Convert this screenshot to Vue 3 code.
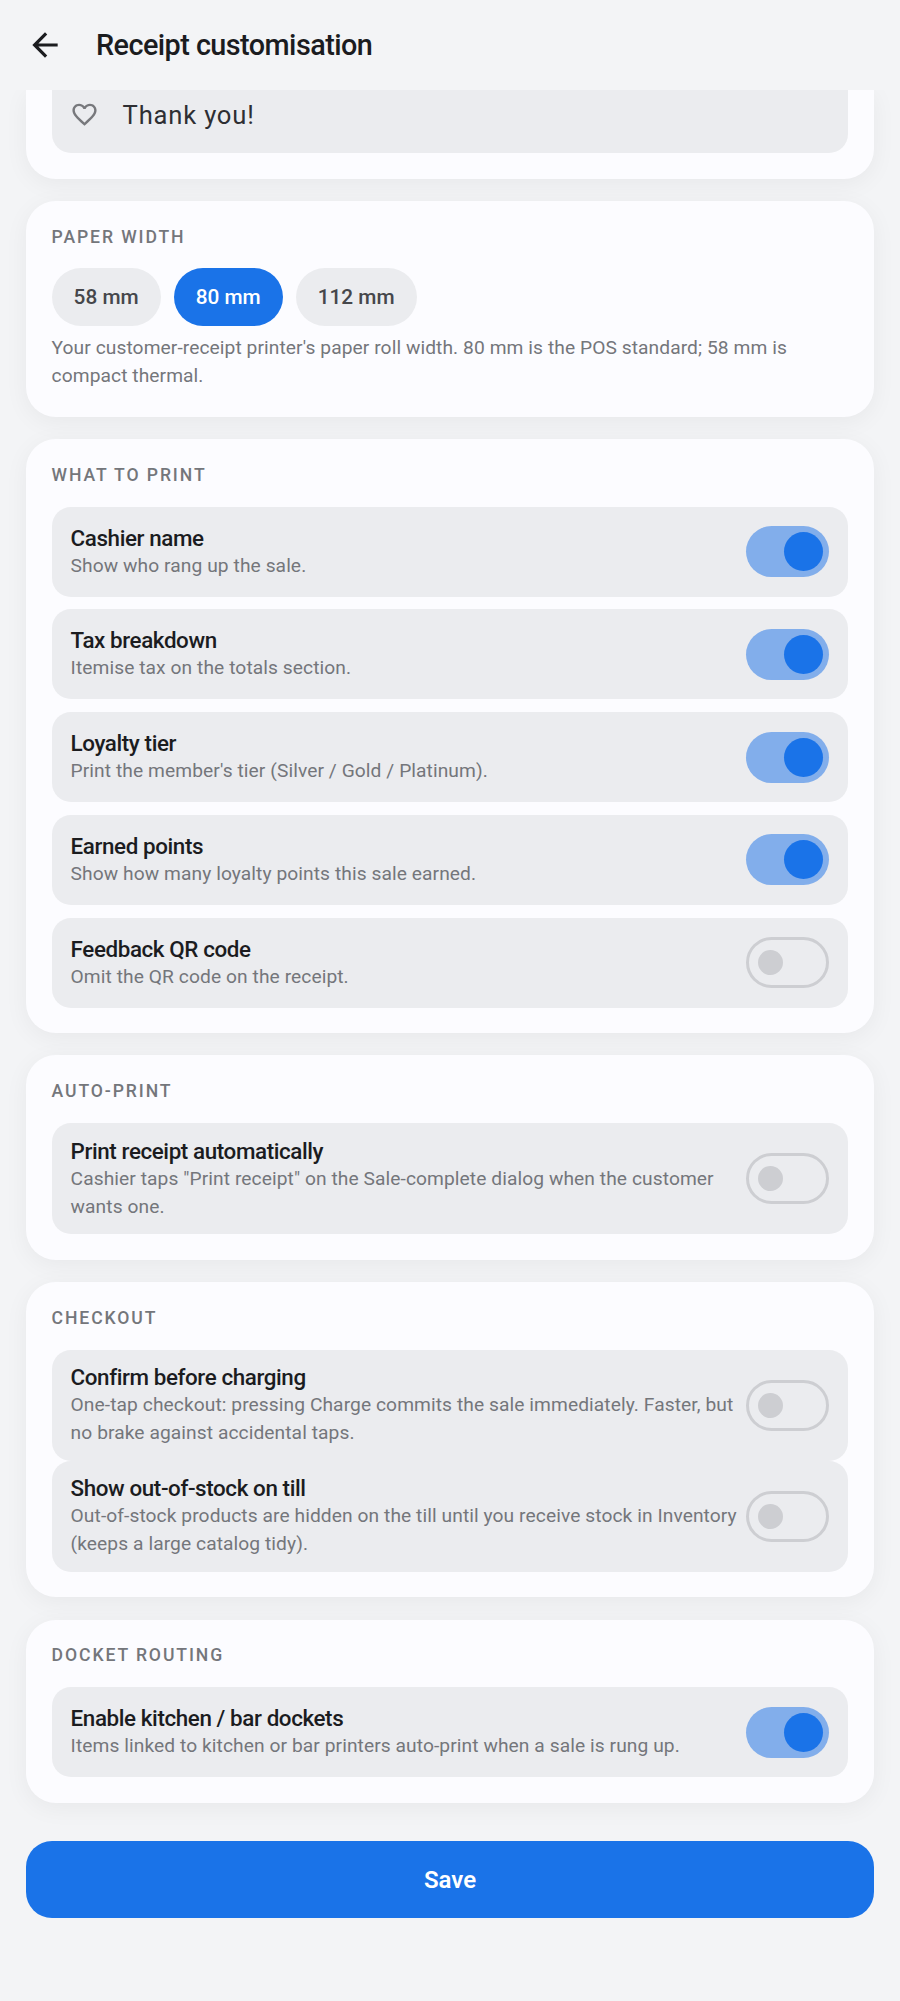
<template>
  <div class="screen">
    <header class="topbar">
      <button class="back" aria-label="Back">
        <svg viewBox="0 0 24 24" width="38" height="38" fill="currentColor">
          <path d="M20 11H7.83l5.59-5.59L12 4l-8 8 8 8 1.41-1.41L7.83 13H20v-2z" />
        </svg>
      </button>
      <h1 class="title">Receipt customisation</h1>
    </header>

    <main class="content">
      <!-- scrolled part of the footer card -->
      <section class="card card-cut">
        <div class="field">
          <svg class="heart" viewBox="0 0 24 24" width="29" height="29" fill="currentColor">
            <path d="M16.5 3c-1.74 0-3.41.81-4.5 2.09C10.91 3.81 9.24 3 7.5 3 4.42 3 2 5.42 2 8.5c0 3.78 3.4 6.86 8.55 11.54L12 21.35l1.45-1.32C18.6 15.36 22 12.28 22 8.5 22 5.42 19.58 3 16.5 3zm-4.4 15.55l-.1.1-.1-.1C7.14 14.24 4 11.39 4 8.5 4 6.5 5.5 5 7.5 5c1.54 0 3.04.99 3.57 2.36h1.87C13.46 5.99 14.96 5 16.5 5c2 0 3.5 1.5 3.5 3.5 0 2.89-3.14 5.74-7.9 10.05z" />
          </svg>
          <span class="field-text">Thank you!</span>
        </div>
      </section>

      <section class="card">
        <h2 class="label">PAPER WIDTH</h2>
        <div class="chips">
          <button
            v-for="w in widths"
            :key="w"
            class="chip"
            :class="{ active: w === paper }"
            @click="paper = w"
          >{{ w }}</button>
        </div>
        <p class="hint">Your customer-receipt printer's paper roll width. 80 mm is the POS standard; 58 mm is compact thermal.</p>
      </section>

      <section v-for="group in groups" :key="group.label" class="card">
        <h2 class="label">{{ group.label }}</h2>
        <div class="rows" :class="{ tight: group.tight }">
          <div v-for="row in group.rows" :key="row.title" class="row">
            <div class="row-text">
              <div class="row-title">{{ row.title }}</div>
              <div class="row-sub">{{ row.sub }}</div>
            </div>
            <button class="switch" :class="{ on: row.on }" @click="row.on = !row.on">
              <span class="thumb"></span>
            </button>
          </div>
        </div>
      </section>

      <button class="save">Save</button>
    </main>
  </div>
</template>

<script setup>
import { reactive, ref } from 'vue'

const widths = ['58 mm', '80 mm', '112 mm']
const paper = ref('80 mm')

const groups = reactive([
  {
    label: 'WHAT TO PRINT',
    rows: [
      { title: 'Cashier name', sub: 'Show who rang up the sale.', on: true },
      { title: 'Tax breakdown', sub: 'Itemise tax on the totals section.', on: true },
      { title: 'Loyalty tier', sub: "Print the member's tier (Silver / Gold / Platinum).", on: true },
      { title: 'Earned points', sub: 'Show how many loyalty points this sale earned.', on: true },
      { title: 'Feedback QR code', sub: 'Omit the QR code on the receipt.', on: false }
    ]
  },
  {
    label: 'AUTO-PRINT',
    rows: [
      {
        title: 'Print receipt automatically',
        sub: 'Cashier taps "Print receipt" on the Sale-complete dialog when the customer wants one.',
        on: false
      }
    ]
  },
  {
    label: 'CHECKOUT',
    tight: true,
    rows: [
      {
        title: 'Confirm before charging',
        sub: 'One-tap checkout: pressing Charge commits the sale immediately. Faster, but no brake against accidental taps.',
        on: false
      },
      {
        title: 'Show out-of-stock on till',
        sub: 'Out-of-stock products are hidden on the till until you receive stock in Inventory (keeps a large catalog tidy).',
        on: false
      }
    ]
  },
  {
    label: 'DOCKET ROUTING',
    rows: [
      {
        title: 'Enable kitchen / bar dockets',
        sub: 'Items linked to kitchen or bar printers auto-print when a sale is rung up.',
        on: true
      }
    ]
  }
])
</script>

<style scoped>
.screen {
  width: 900px;
  height: 2001px;
  overflow: hidden;
  background: #f3f4f6;
  font-family: Roboto, "Liberation Sans", sans-serif;
  color: #1b1c1f;
}

.topbar {
  position: relative;
  z-index: 2;
  height: 90px;
  display: flex;
  align-items: center;
  padding-left: 26px;
  background: #f3f4f6;
}

.back {
  width: 38px;
  height: 38px;
  padding: 0;
  border: 0;
  background: none;
  color: #1b1c1f;
}

.back svg {
  display: block;
}

.title {
  margin: 0 0 0 32px;
  font-size: 28.8px;
  font-weight: 500;
  letter-spacing: -0.55px;
}

.content {
  display: flex;
  flex-direction: column;
  gap: 22.4px;
  padding: 0 26px;
}

.card {
  padding: 25.6px;
  background: #fcfcff;
  border-radius: 30px;
  box-shadow: 0 5px 24px rgba(0, 0, 0, 0.05);
}

.card-cut {
  padding-top: 0;
  border-radius: 0 0 30px 30px;
}

.field {
  height: 63px;
  box-sizing: border-box;
  display: flex;
  align-items: center;
  padding: 0 0 14px 18px;
  background: #ebecef;
  border-radius: 0 0 19px 19px;
}

.heart {
  color: #77787c;
}

.field-text {
  margin-left: 24px;
  font-size: 25.6px;
  letter-spacing: 0.8px;
  color: #2e2f33;
}

.label {
  margin: 0 0 21px;
  font-size: 17.6px;
  line-height: 21px;
  font-weight: 500;
  letter-spacing: 1.9px;
  color: #74767b;
}

.chips {
  display: flex;
  gap: 13px;
  margin-top: -1px;
}

.chip {
  height: 58px;
  padding: 0 22px;
  border: 0;
  border-radius: 29px;
  background: #ebecef;
  color: #46474b;
  font: 500 20.8px Roboto, "Liberation Sans", sans-serif;
}

.chip.active {
  background: #1a73e8;
  color: #fff;
}

.hint {
  margin: 8px 0 0;
  font-size: 19.2px;
  line-height: 28.8px;
  letter-spacing: 0.08px;
  color: #74767b;
}

.rows {
  display: flex;
  flex-direction: column;
  gap: 12.7px;
}

.rows.tight {
  gap: 0;
}

.row {
  min-height: 90px;
  box-sizing: border-box;
  display: flex;
  align-items: center;
  padding: 13.5px 19px;
  background: #ebecef;
  border-radius: 19px;
}

.row-text {
  flex: 1;
  min-width: 0;
}

.row-title {
  font-size: 22.4px;
  line-height: 28px;
  font-weight: 500;
  letter-spacing: -0.4px;
  color: #1b1c1f;
}

.row-sub {
  font-size: 19.2px;
  line-height: 28px;
  letter-spacing: 0.08px;
  color: #74767b;
}

.switch {
  flex: none;
  position: relative;
  width: 83px;
  height: 51px;
  box-sizing: border-box;
  padding: 0;
  border: 3px solid #cdced2;
  border-radius: 26px;
  background: transparent;
}

.thumb {
  position: absolute;
  left: 9px;
  top: 10px;
  width: 25px;
  height: 25px;
  border-radius: 50%;
  background: #cdced2;
}

.switch.on {
  border: 0;
  background: #82aeeb;
}

.switch.on .thumb {
  left: 38px;
  top: 6px;
  width: 39px;
  height: 39px;
  background: #1a73e8;
}

.save {
  height: 77px;
  margin-top: 16px;
  border: 0;
  border-radius: 26px;
  background: #1a73e8;
  color: #fff;
  font: 600 24px Roboto, "Liberation Sans", sans-serif;
}
</style>
